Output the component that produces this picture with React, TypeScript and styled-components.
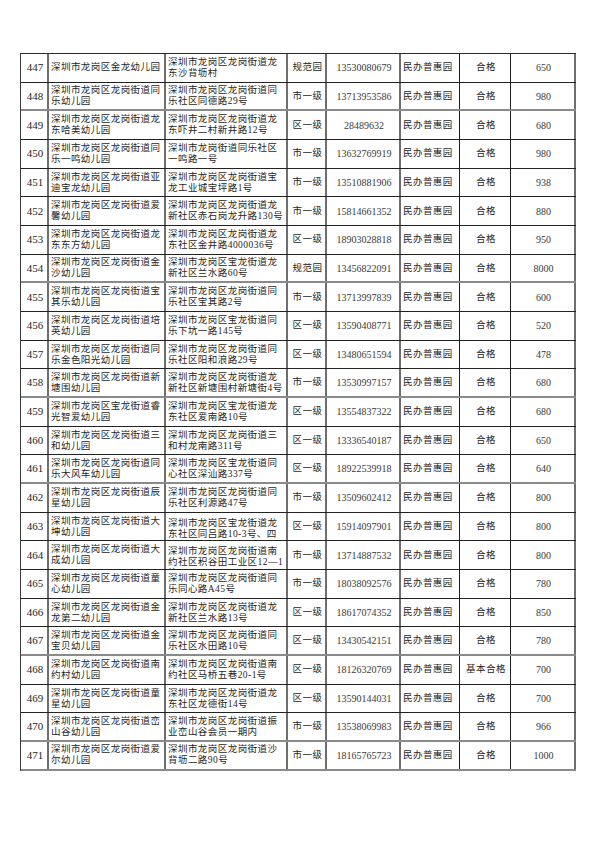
import { createGlobalStyle } from 'styled-components'
import styled from 'styled-components'

const GlobalStyle = createGlobalStyle`
  html, body {
    margin: 0;
    padding: 0;
    background: #fff;
  }
  * {
    box-sizing: border-box;
  }
`

const Page = styled.div`
  width: 595px;
  height: 841px;
  padding: 53px 0 0 20px;
  background: #fff;
  font-family: 'Liberation Serif', 'Noto Sans CJK SC', serif;
  color: #262626;
`

const Table = styled.div`
  display: flex;
  flex-direction: column;
  width: 556px;
  border-top: 1px solid #2a2a2a;
  border-left: 1px solid #3a3a3a;
`

const Row = styled.div<{ $soft?: boolean }>`
  display: grid;
  grid-template-columns: 28px 117px 122px 39px 74px 59px 51px 65px;
  height: 28.68px;
  border-bottom: ${(p) => (p.$soft ? '2px solid #8a8a8a' : '1px solid #222')};
`

type Kind = 'index' | 'text' | 'digits' | 'label'

const Cell = styled.div<{ $kind: Kind; $center?: boolean; $hard?: boolean; $clip?: boolean }>`
  display: flex;
  flex-direction: column;
  justify-content: ${(p) => (p.$clip ? 'flex-start' : 'center')};
  align-items: ${(p) => (p.$center ? 'center' : 'flex-start')};
  padding: ${(p) => (p.$clip ? '5px 0 0 2px' : '0 0 0 2px')};
  overflow: hidden;
  border-right: ${(p) => (p.$hard ? '1px solid #1e1e1e' : '2px solid #6e6e6e')};
  font-size: ${(p) =>
    p.$kind === 'index' ? '11px' : p.$kind === 'digits' ? '10px' : '9.5px'};
  letter-spacing: ${(p) => (p.$kind === 'text' || p.$kind === 'label' ? '0.45px' : '0')};
  line-height: 11px;
  white-space: nowrap;
  color: ${(p) => (p.$kind === 'digits' ? '#3a3a3a' : '#262626')};
`

const Line = styled.span`
  display: block;
`

type School = {
  no: number
  name: string
  addr: string
  level: string
  phone: string
  result?: string
  size: number
}

const rows: School[] = [
  { no: 447, name: '深圳市龙岗区金龙幼儿园', addr: '深圳市龙岗区龙岗街道龙|东沙背坜村', level: '规范园', phone: '13530080679', size: 650 },
  { no: 448, name: '深圳市龙岗区龙岗街道同乐幼儿园', addr: '深圳市龙岗区龙岗街道同|乐社区同德路29号', level: '市一级', phone: '13713953586', size: 980 },
  { no: 449, name: '深圳市龙岗区龙岗街道龙东哈美幼儿园', addr: '深圳市龙岗区龙岗街道龙|东吓井二村新井路12号', level: '区一级', phone: '28489632', size: 680 },
  { no: 450, name: '深圳市龙岗区龙岗街道同乐一鸣幼儿园', addr: '深圳市龙岗街道同乐社区|一鸣路一号', level: '市一级', phone: '13632769919', size: 980 },
  { no: 451, name: '深圳市龙岗区龙岗街道亚迪宝龙幼儿园', addr: '深圳市龙岗区龙岗街道宝|龙工业城宝坪路1号', level: '市一级', phone: '13510881906', size: 938 },
  { no: 452, name: '深圳市龙岗区龙岗街道爱馨幼儿园', addr: '深圳市龙岗区龙岗街道龙|新社区赤石岗龙升路130号', level: '市一级', phone: '15814661352', size: 880 },
  { no: 453, name: '深圳市龙岗区龙岗街道龙东东方幼儿园', addr: '深圳市龙岗区龙岗街道龙|东社区金井路4000036号', level: '区一级', phone: '18903028818', size: 950 },
  { no: 454, name: '深圳市龙岗区龙岗街道金沙幼儿园', addr: '深圳市龙岗区宝龙街道龙|新社区兰水路60号', level: '规范园', phone: '13456822091', size: 8000 },
  { no: 455, name: '深圳市龙岗区龙岗街道宝其乐幼儿园', addr: '深圳市龙岗区龙岗街道同|乐社区宝其路2号', level: '市一级', phone: '13713997839', size: 600 },
  { no: 456, name: '深圳市龙岗区龙岗街道培英幼儿园', addr: '深圳市龙岗区宝龙街道同|乐下坑一路145号', level: '区一级', phone: '13590408771', size: 520 },
  { no: 457, name: '深圳市龙岗区龙岗街道同乐金色阳光幼儿园', addr: '深圳市龙岗区龙岗街道同|乐社区阳和浪路29号', level: '区一级', phone: '13480651594', size: 478 },
  { no: 458, name: '深圳市龙岗区龙岗街道新塘围幼儿园', addr: '深圳市龙岗区龙岗街道龙|新社区新塘围村新塘街4号', level: '市一级', phone: '13530997157', size: 680 },
  { no: 459, name: '深圳市龙岗区宝龙街道睿光智爱幼儿园', addr: '深圳市龙岗区宝龙街道龙|东社区爱南路10号', level: '区一级', phone: '13554837322', size: 680 },
  { no: 460, name: '深圳市龙岗区龙岗街道三和幼儿园', addr: '深圳市龙岗区龙岗街道三|和村龙南路311号', level: '区一级', phone: '13336540187', size: 650 },
  { no: 461, name: '深圳市龙岗区龙岗街道同乐大风车幼儿园', addr: '深圳市龙岗区宝龙街道同|心社区深汕路337号', level: '区一级', phone: '18922539918', size: 640 },
  { no: 462, name: '深圳市龙岗区龙岗街道辰星幼儿园', addr: '深圳市龙岗区龙岗街道同|乐社区利源路47号', level: '市一级', phone: '13509602412', size: 800 },
  { no: 463, name: '深圳市龙岗区龙岗街道大坤幼儿园', addr: '深圳市龙岗区宝龙街道龙|东社区同吕路10-3号、四|栋', level: '区一级', phone: '15914097901', size: 800 },
  { no: 464, name: '深圳市龙岗区龙岗街道大成幼儿园', addr: '深圳市龙岗区龙岗街道南|约社区积谷田工业区12—1|栋', level: '市一级', phone: '13714887532', size: 800 },
  { no: 465, name: '深圳市龙岗区龙岗街道童心幼儿园', addr: '深圳市龙岗区龙岗街道同|乐同心路A45号', level: '市一级', phone: '18038092576', size: 780 },
  { no: 466, name: '深圳市龙岗区龙岗街道金龙第二幼儿园', addr: '深圳市龙岗区龙岗街道龙|新社区兰水路13号', level: '区一级', phone: '18617074352', size: 850 },
  { no: 467, name: '深圳市龙岗区龙岗街道金宝贝幼儿园', addr: '深圳市龙岗区龙岗街道同|乐社区水田路10号', level: '区一级', phone: '13430542151', size: 780 },
  { no: 468, name: '深圳市龙岗区龙岗街道南约村幼儿园', addr: '深圳市龙岗区龙岗街道南|约社区马桥五巷20-1号', level: '区一级', phone: '18126320769', result: '基本合格', size: 700 },
  { no: 469, name: '深圳市龙岗区龙岗街道童星幼儿园', addr: '深圳市龙岗区龙岗街道龙|东社区龙德街14号', level: '区一级', phone: '13590144031', size: 700 },
  { no: 470, name: '深圳市龙岗区龙岗街道峦山谷幼儿园', addr: '深圳市龙岗区龙岗街道振|业峦山谷会员一期内', level: '市一级', phone: '13538069983', size: 966 },
  { no: 471, name: '深圳市龙岗区龙岗街道爱尔幼儿园', addr: '深圳市龙岗区龙岗街道沙|背坜二路90号', level: '市一级', phone: '18165765723', size: 1000 },
]

// rows whose bottom rule prints as a grey double line in the scan
const softRules = new Set([448, 454, 458, 461, 467, 470, 471])

const splitName = (name: string) =>
  name.length > 11 ? [name.slice(0, 11), name.slice(11)] : [name]

const App = () => (
  <>
    <GlobalStyle />
    <Page>
      <Table>
        {rows.map((r) => {
          const addr = r.addr.split('|')
          return (
            <Row key={r.no} $soft={softRules.has(r.no)}>
              <Cell $kind="index" $center>
                {r.no}
              </Cell>
              <Cell $kind="text">
                {splitName(r.name).map((l) => (
                  <Line key={l}>{l}</Line>
                ))}
              </Cell>
              <Cell $kind="text" $clip={addr.length > 2}>
                {addr.map((l) => (
                  <Line key={l}>{l}</Line>
                ))}
              </Cell>
              <Cell $kind="label" $center>
                {r.level}
              </Cell>
              <Cell $kind="digits" $center>
                {r.phone}
              </Cell>
              <Cell $kind="label" $hard>
                民办普惠园
              </Cell>
              <Cell $kind="label" $center $hard>
                {r.result ?? '合格'}
              </Cell>
              <Cell $kind="digits" $center>
                {r.size}
              </Cell>
            </Row>
          )
        })}
      </Table>
    </Page>
  </>
)

export default App
